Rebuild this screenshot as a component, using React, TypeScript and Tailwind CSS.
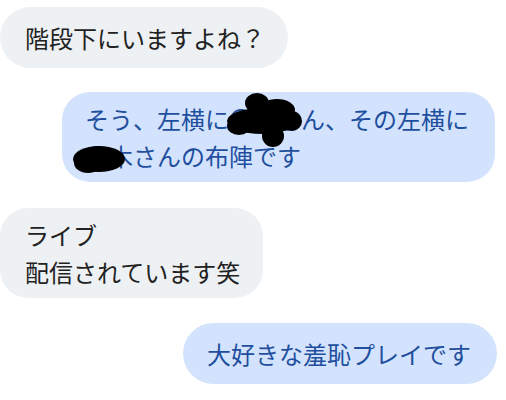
import React from "react";

const font = { fontFamily: '"Noto Sans CJK JP", "Noto Sans", sans-serif' };

export default function App() {
  return (
    <div className="w-[506px] h-[400px] bg-white overflow-hidden flex flex-col pt-[7px]" style={font}>
      <div className="self-start w-[288px] h-[61px] rounded-full bg-[#eef1f4] text-[#222222] text-[24px] leading-[37px] pl-[25px] py-[12px] whitespace-nowrap">
        階段下にいますよね？
      </div>

      <div className="relative self-end mr-[11px] mt-[24px] w-[433px] h-[90px] rounded-[28px] bg-[#d3e3fd] text-[#1f4f9e] text-[24px] leading-[37px] pl-[23px] py-[8px] whitespace-nowrap">
        そう、左横に〇〇さん、その左横に
        <br />
        〇木さんの布陣です
        <svg className="absolute left-0 top-0" width="433" height="90" viewBox="0 0 433 90">
          <g fill="#000" transform="translate(-62,-92)">
            <ellipse cx="262" cy="121" rx="35" ry="13" />
            <ellipse cx="257" cy="103" rx="12" ry="10" />
            <ellipse cx="277" cy="110" rx="18" ry="11" />
            <ellipse cx="273" cy="136" rx="11" ry="11" />
            <ellipse cx="292" cy="121" rx="10" ry="10" />
            <ellipse cx="239" cy="126" rx="12" ry="9" />
            <ellipse cx="99" cy="159" rx="26" ry="13" />
            <ellipse cx="88" cy="163" rx="14" ry="10" />
          </g>
        </svg>
      </div>

      <div className="self-start mt-[26px] w-[263px] h-[90px] rounded-[28px] bg-[#eef1f4] text-[#222222] text-[24px] leading-[37px] pl-[25px] py-[8px] whitespace-nowrap">
        ライブ
        <br />
        配信されています笑
      </div>

      <div className="self-end mr-[9px] mt-[25px] w-[314px] h-[61px] rounded-full bg-[#d3e3fd] text-[#1f4f9e] text-[24px] leading-[37px] pl-[24px] py-[12px] whitespace-nowrap">
        大好きな羞恥プレイです
      </div>
    </div>
  );
}
